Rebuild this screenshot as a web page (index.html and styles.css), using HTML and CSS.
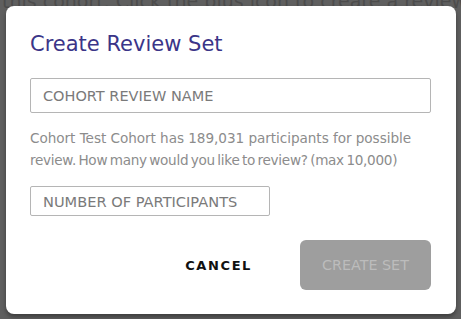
FILE: index.html
```
<!DOCTYPE html>
<html>
<head>
<meta charset="utf-8">
<link rel="stylesheet" href="styles.css">
</head>
<body>
<div class="page">
  <p class="behind">this cohort. Click the plus icon to create a review set</p>
</div>
<div class="modal">
  <h1 class="title">Create Review Set</h1>
  <div class="field field-name">COHORT REVIEW NAME</div>
  <p class="info"><span class="line-a">Cohort Test Cohort has 189,031 participants for possible</span><br><span class="line-b">review. How many would you like to review? (max 10,000)</span></p>
  <div class="field field-num">NUMBER OF PARTICIPANTS</div>
  <div class="actions">
    <button class="btn-cancel">CANCEL</button>
    <button class="btn-create">CREATE SET</button>
  </div>
</div>
</body>
</html>
```
FILE: styles.css
```
html, body {
  margin: 0;
  padding: 0;
}
body {
  width: 461px;
  height: 319px;
  overflow: hidden;
  background: #5f5f5f;
  font-family: "DejaVu Sans", sans-serif;
}
.page {
  width: 461px;
  overflow: hidden;
}
.behind {
  margin: -9px 0 0 2px;
  font-size: 19px;
  line-height: 20px;
  color: #4c4c4c;
  white-space: nowrap;
}
.modal {
  position: absolute;
  left: 6px;
  top: 6px;
  width: 450px;
  height: 308px;
  box-sizing: border-box;
  padding: 24px 25px 24px 24px;
  background: #fff;
  border-radius: 8px;
  box-shadow: 0 3px 4px rgba(0,0,0,0.35);
  display: flex;
  flex-direction: column;
}
.title {
  margin: 0;
  font-size: 21px;
  font-weight: 400;
  line-height: 28px;
  color: #3b3588;
}
.field {
  box-sizing: border-box;
  border: 1px solid #b5b5b5;
  border-radius: 2px;
  padding: 0 12px;
  color: #7a7a7a;
  display: flex;
  align-items: center;
  white-space: nowrap;
}
.field-name {
  margin-top: 20px;
  height: 35px;
  font-size: 14.5px;
}
.info {
  margin: 14px 0 0 0;
  font-size: 13.6px;
  line-height: 22px;
  color: #8c8c8c;
  white-space: nowrap;
}
.line-a {
  letter-spacing: -0.05px;
}
.line-b {
  letter-spacing: -0.3px;
  word-spacing: -1.5px;
}
.field-num {
  margin-top: 15px;
  width: 240px;
  height: 30px;
  font-size: 14.6px;
}
.actions {
  margin-top: auto;
  display: flex;
  justify-content: flex-end;
  align-items: center;
  gap: 32px;
}
.btn-cancel {
  border: none;
  background: none;
  font-family: inherit;
  font-size: 13px;
  font-weight: 700;
  letter-spacing: 1.6px;
  color: #111;
  padding: 0 16px;
}
.btn-create {
  border: none;
  width: 131px;
  height: 50px;
  border-radius: 6px;
  background: #9e9e9e;
  color: #bcbcbc;
  font-family: inherit;
  font-size: 14.3px;
  padding: 0;
}
```
